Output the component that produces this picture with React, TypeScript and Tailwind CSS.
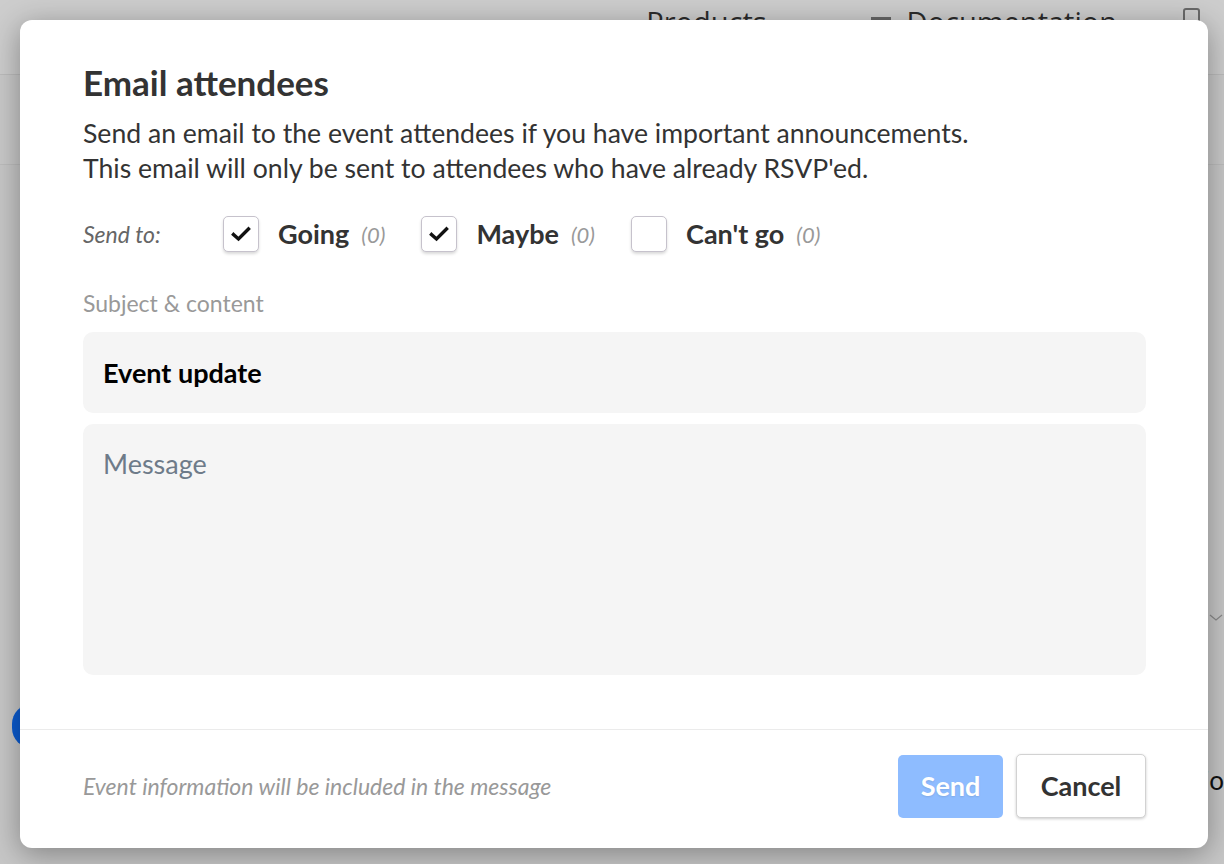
import { useState } from "react";

const OPTIONS = [
  { id: "going", label: "Going", count: 0, checked: true },
  { id: "maybe", label: "Maybe", count: 0, checked: true },
  { id: "cantgo", label: "Can't go", count: 0, checked: false },
];

function Checkbox({ checked, onChange }: { checked: boolean; onChange: () => void }) {
  return (
    <button
      onClick={onChange}
      className="w-9 h-9 flex items-center justify-center bg-white rounded-[5px] border border-[#c6c2cc] shadow-[0_2px_3px_rgba(0,0,0,0.15)]"
    >
      {checked && (
        <svg width="20" height="16" viewBox="0 0 20 16" fill="none">
          <path d="M2.5 8.5 L7.5 13 L17.5 3" stroke="#111" strokeWidth="3.4" strokeLinecap="square" />
        </svg>
      )}
    </button>
  );
}

export default function App() {
  const [opts, setOpts] = useState(OPTIONS);
  const [subject, setSubject] = useState("Event update");
  const [message, setMessage] = useState("");

  return (
    <div className="relative w-[1224px] h-[864px] overflow-hidden bg-[#c7c7c7]" style={{ fontFamily: "Lato, 'Open Sans', sans-serif" }}>
      {/* page behind the overlay */}
      <div className="h-[75px] bg-[#cdcdcd] border-b border-[#bcbcbc] flex items-start justify-end pr-[24px] text-[#2b2b2b]">
        <div className="flex items-center gap-[10px] mt-[4px] mr-[80px]" style={{ fontFamily: "'Open Sans', sans-serif" }}>
          <span className="text-[29px] leading-[36px]">Products</span>
          <svg width="14" height="10" viewBox="0 0 14 10" className="mt-[10px]"><path d="M2 3 L7 7 L12 3" stroke="#666" strokeWidth="1.5" fill="none" /></svg>
        </div>
        <div className="flex items-center gap-[16px] mt-[4px] mr-[66px]" style={{ fontFamily: "'Open Sans', sans-serif" }}>
          <span className="w-[20px] h-[3px] bg-[#666] mb-[8px]" />
          <span className="text-[29px] leading-[36px]">Documentation</span>
        </div>
        <div className="w-[17px] h-[20px] mt-[8px] border-2 border-[#6a6a6a] rounded-[3px]" />
      </div>
      <div className="h-[90px] bg-[#c9c9c9] border-b border-[#bdbdbd]" />

      <div className="absolute left-[12px] top-[704px] w-[40px] h-[44px] rounded-full bg-[#0a5bd0]" />
      <svg className="absolute left-[1209px] top-[612px]" width="16" height="10" viewBox="0 0 16 10"><path d="M1 3 L7 8 L13 3" stroke="#8a8a8a" strokeWidth="1.2" fill="none" /></svg>
      <span className="absolute left-[1203px] top-[764px] text-[26px] leading-[32px] text-[#111]"><span className="text-[#1a73c8]">i</span>o</span>

      {/* modal */}
      <div className="absolute left-[20px] top-[20px] w-[1188px] h-[828px] bg-white rounded-[12px] shadow-[0_6px_30px_rgba(0,0,0,0.35)] flex flex-col">
        <div className="pl-[63px] pr-[62px] pt-[44px]">
          <h1 className="text-[35px] leading-[36px] font-bold text-[#333]">Email attendees</h1>
          <p className="mt-[16px] text-[26.6px] leading-[35px] text-[#333]">
            Send an email to the event attendees if you have important announcements.
            <br />
            This email will only be sent to attendees who have already RSVP'ed.
          </p>

          <div className="mt-[30px] flex items-center h-9">
            <span className="w-[140px] italic text-[23px] text-[#666]">Send to:</span>
            <div className="flex items-center gap-[36px]">
              {opts.map((o) => (
                <div key={o.id} className="flex items-center">
                  <Checkbox
                    checked={o.checked}
                    onChange={() => setOpts(opts.map((x) => (x.id === o.id ? { ...x, checked: !x.checked } : x)))}
                  />
                  <span className="ml-[19px] text-[27px] font-bold text-[#333]">{o.label}</span>
                  <span className="ml-[12px] italic text-[22px] text-[#999]">({o.count})</span>
                </div>
              ))}
            </div>
          </div>

          <div className="mt-[39px] text-[23px] leading-[24px] text-[#999]">Subject &amp; content</div>
          <input
            value={subject}
            onChange={(e) => setSubject(e.target.value)}
            className="mt-[17px] w-full h-[81px] px-[20px] bg-[#f5f5f5] rounded-[10px] outline-none text-[27px] font-bold text-black"
          />
          <textarea
            value={message}
            onChange={(e) => setMessage(e.target.value)}
            placeholder="Message"
            className="mt-[11px] w-full h-[251px] px-[20px] py-[22px] bg-[#f5f5f5] rounded-[10px] outline-none resize-none text-[27px] leading-[36px] text-[#333] placeholder:text-[#6e7b89]"
          />
        </div>

        <div className="mt-[48px] border-t border-[#ebebeb] pl-[63px] pr-[62px] pt-[24px] flex items-center justify-between">
          <span className="italic text-[23px] text-[#999]">Event information will be included in the message</span>
          <div className="flex items-center gap-[13px]">
            <button className="w-[105px] h-[63px] rounded-[5px] bg-[#8ebcff] text-white text-[27px] font-bold [text-shadow:0_1px_2px_rgba(0,0,0,0.1)]">
              Send
            </button>
            <button className="w-[130px] h-[64px] rounded-[5px] bg-white border border-[#d2d2d2] shadow-[0_1px_3px_rgba(0,0,0,0.2)] text-[27px] font-bold text-[#333]">
              Cancel
            </button>
          </div>
        </div>
      </div>
    </div>
  );
}
